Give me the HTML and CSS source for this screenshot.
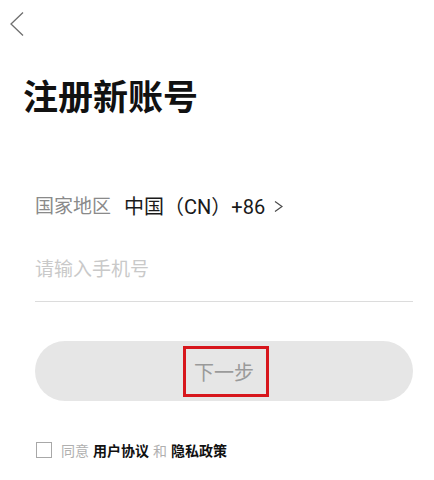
FILE: index.html
```html
<!DOCTYPE html>
<html lang="zh-CN">
<head>
<meta charset="utf-8">
<title>注册新账号</title>
<link rel="stylesheet" href="styles.css">
</head>
<body>
<div class="page">
  <div class="back" aria-label="返回">
    <svg width="14" height="24" viewBox="0 0 14 24"><polyline points="13,0.5 1,12 13,23.5" fill="none" stroke="#6f6f6f" stroke-width="1.3"/></svg>
  </div>
  <h1 class="title">注册新账号</h1>
  <div class="form">
    <div class="country">
      <span class="label">国家地区</span>
      <span class="value">中国（CN）+86</span>
      <svg class="arrow" width="9" height="11" viewBox="0 0 9 11"><polyline points="1,0.5 8,5.5 1,10.5" fill="none" stroke="#4a4a4a" stroke-width="1.2"/></svg>
    </div>
    <div class="field">
      <span class="placeholder">请输入手机号</span>
    </div>
    <div class="btn">
      <span class="btn-text">下一步</span>
    </div>
    <div class="agree">
      <span class="check"></span>
      <span class="muted">同意</span>
      <span class="strong">用户协议</span>
      <span class="muted">和</span>
      <span class="strong">隐私政策</span>
    </div>
  </div>
</div>
</body>
</html>
```
FILE: styles.css
```css
html, body {
  margin: 0;
  padding: 0;
  background: #ffffff;
}
body {
  font-family: Roboto, "Noto Sans CJK SC", sans-serif;
  width: 434px;
  height: 480px;
  overflow: hidden;
}
.page {
  display: flex;
  flex-direction: column;
}
.back {
  margin: 12px 0 0 10px;
  width: 14px;
  height: 24px;
}
.back svg {
  display: block;
}
.title {
  margin: 41px 0 0 23px;
  font-size: 35px;
  line-height: 35px;
  height: 35px;
  font-weight: 700;
  color: #111111;
  font-family: "Noto Sans CJK SC", sans-serif;
}
.form {
  display: flex;
  flex-direction: column;
  padding: 0 21px 0 35px;
}
.country {
  margin-top: 85px;
  display: flex;
  align-items: center;
  height: 20px;
  font-size: 19px;
  line-height: 20px;
}
.label {
  color: #8a8a8a;
}
.value {
  margin-left: 13px;
  color: #1a1a1a;
  font-size: 20px;
}
.arrow {
  display: block;
  margin-left: 9px;
  margin-top: -1px;
}
.field {
  margin-top: 43px;
  height: 20px;
  padding-bottom: 21px;
  border-bottom: 1px solid #dcdcdc;
  font-size: 19px;
  line-height: 20px;
}
.placeholder {
  color: #c9c9c9;
}
.btn {
  margin-top: 39px;
  height: 60px;
  border-radius: 30px;
  background: #e6e6e6;
  display: flex;
  align-items: center;
  justify-content: center;
}
.btn-text {
  display: inline-flex;
  align-items: center;
  box-sizing: border-box;
  width: 86px;
  height: 51px;
  padding: 0 12px 0 8px;
  margin-left: 4px;
  border: 3px solid #d7161c;
  font-size: 20px;
  color: #9a9a9a;
  font-family: "Noto Sans CJK SC", sans-serif;
}
.agree {
  margin-top: 41px;
  display: flex;
  align-items: center;
  font-size: 14px;
  line-height: 15px;
  font-family: "Noto Sans CJK SC", sans-serif;
}
.check {
  box-sizing: border-box;
  width: 16px;
  height: 16px;
  border: 1px solid #a8a8a8;
  margin: 0 9px 0 1px;
}
.muted {
  color: #b0b0b0;
  margin-right: 4px;
}
.strong {
  color: #111111;
  font-weight: 700;
  margin-right: 4px;
}
```
